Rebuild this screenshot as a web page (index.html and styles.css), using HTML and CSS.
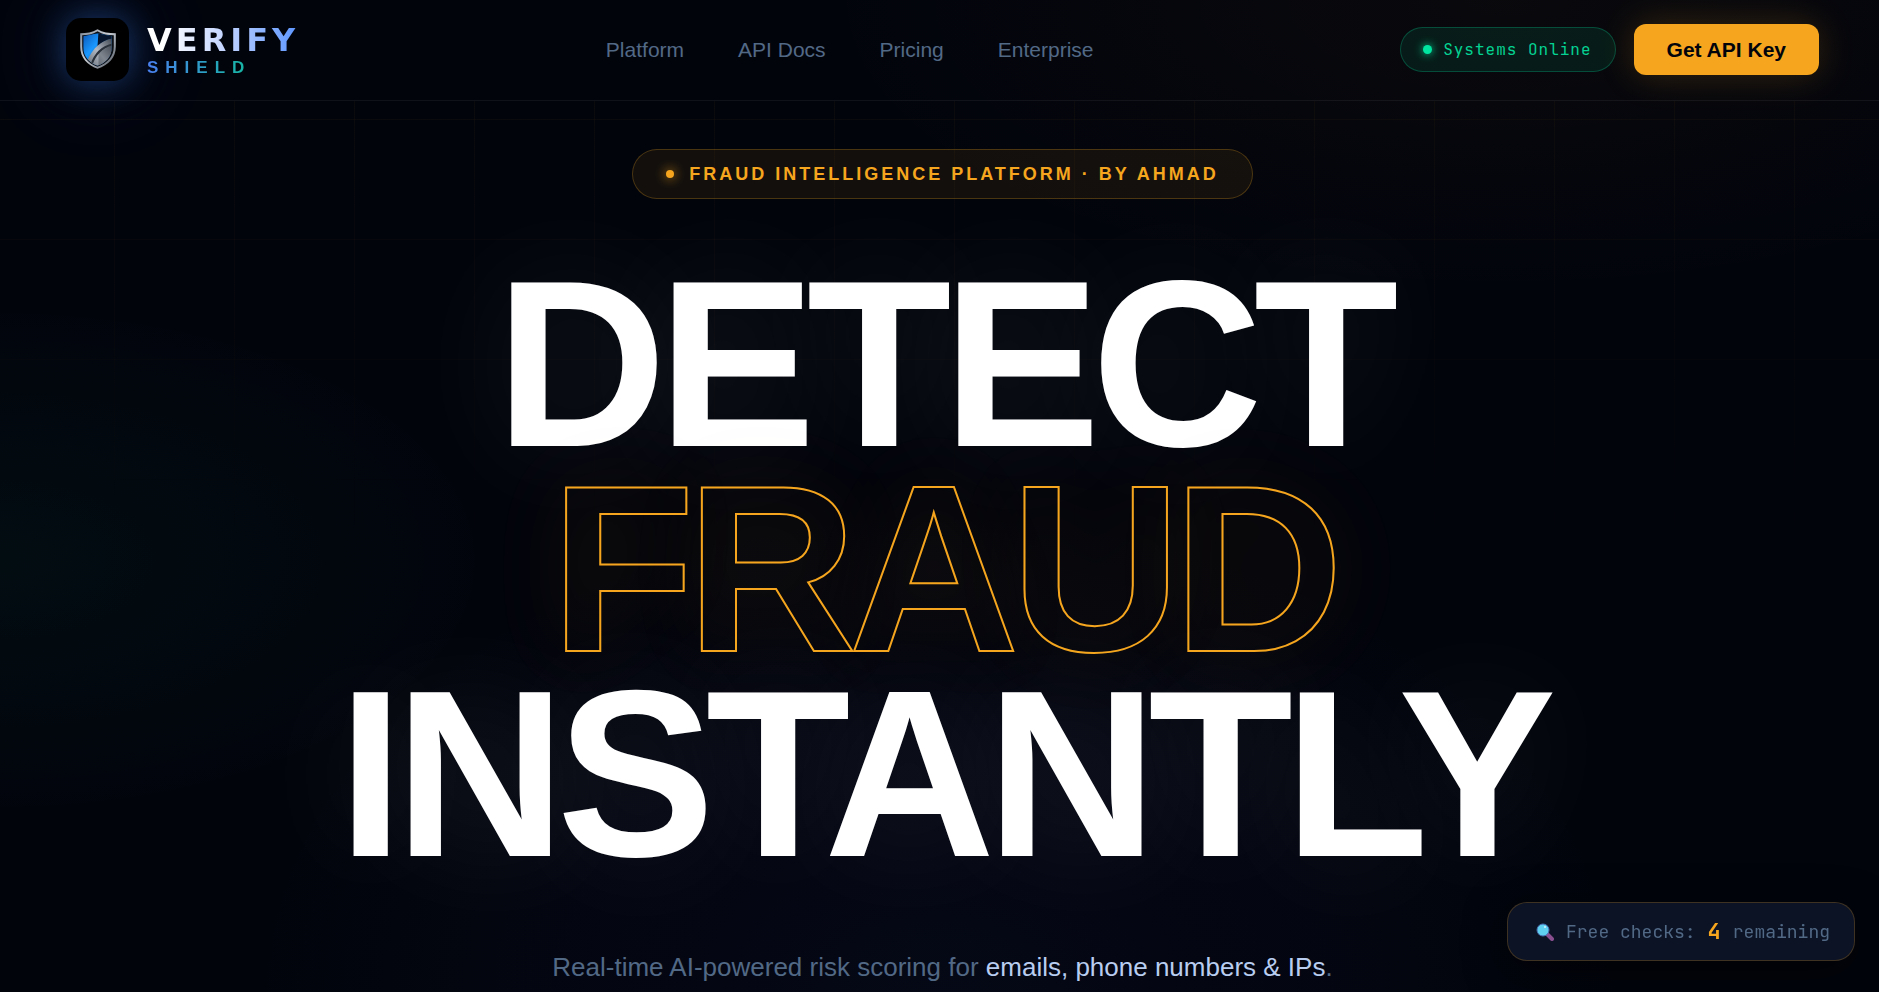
FILE: index.html
```html
<!DOCTYPE html>
<html lang="en">
<head>
    <meta charset="UTF-8">
    <meta name="viewport" content="width=device-width, initial-scale=1.0">
    <title>Verify Shield</title>
    <link rel="stylesheet" href="styles.css">
</head>
<body>

    <header class="navbar">
        <a href="#" class="logo">
            <span class="logo-tile">
                <svg viewBox="0 0 54 54" aria-hidden="true">
                    <defs>
                        <linearGradient id="rim" x1="0" y1="0" x2="1" y2="1">
                            <stop offset="0" stop-color="#7d8794"/>
                            <stop offset="0.45" stop-color="#c9ced5"/>
                            <stop offset="1" stop-color="#4a515b"/>
                        </linearGradient>
                        <linearGradient id="blue" x1="0" y1="0" x2="1" y2="1">
                            <stop offset="0" stop-color="#0a4fae"/>
                            <stop offset="0.4" stop-color="#1a98ff"/>
                            <stop offset="1" stop-color="#062a63"/>
                        </linearGradient>
                        <linearGradient id="steel" x1="1" y1="0" x2="0" y2="1">
                            <stop offset="0" stop-color="#3b424c"/>
                            <stop offset="0.5" stop-color="#b3b9c2"/>
                            <stop offset="1" stop-color="#5d6570"/>
                        </linearGradient>
                        <clipPath id="face">
                            <path d="M27 11 L41 14 V25 C41 34 35 40 27 43 C19 40 13 34 13 25 V14 Z"/>
                        </clipPath>
                    </defs>
                    <path d="M27 7 C32 10 38 11 45 11 V24 C45 35 38 42 27 46 C17 42 10 35 10 24 V11 C16 11 22 10 27 7 Z" fill="url(#rim)"/>
                    <path d="M27 9 C32 12 37 13 43 13 V24 C43 34 37 40 27 44 C17 40 12 34 12 24 V13 C17 13 22 12 27 9 Z" fill="#0b0f16"/>
                    <g clip-path="url(#face)">
                        <rect x="12" y="9" width="30" height="36" fill="url(#blue)"/>
                        <path d="M28 9 H44 V16 C36 17 31 20 27 24 Z" fill="#07152c"/>
                        <path d="M42 16 C32 18 22 25 17 38 L27 46 L42 34 Z" fill="url(#steel)"/>
                        <path d="M42 22 C33 24 25 30 21 42" fill="none" stroke="#2b323b" stroke-width="2"/>
                        <path d="M28 31 V46 L44 32 V23 C37 24 32 27 28 31 Z" fill="#20262e" opacity="0.35"/>
                    </g>
                </svg>
            </span>
            <span class="logo-text">
                <span class="logo-name">VERIFY</span>
                <span class="logo-sub">SHIELD</span>
            </span>
        </a>

        <nav class="nav-links">
            <a href="#platform">Platform</a>
            <a href="#docs">API Docs</a>
            <a href="#pricing">Pricing</a>
            <a href="#enterprise">Enterprise</a>
        </nav>

        <div class="nav-actions">
            <div class="status"><span class="status-dot"></span>Systems Online</div>
            <button type="button" class="key-button">Get API Key</button>
        </div>
    </header>

    <main class="hero">
        <div class="badge"><span class="badge-dot"></span>FRAUD INTELLIGENCE PLATFORM · BY AHMAD</div>
        <h1 class="title">
            <span>DETECT</span>
            <span class="outline">FRAUD</span>
            <span>INSTANTLY</span>
        </h1>
        <p class="subtitle">Real-time AI-powered risk scoring for <strong>emails, phone numbers &amp; IPs</strong>.</p>
    </main>

    <div class="checks">
        <svg class="checks-icon" viewBox="0 0 18 18" aria-hidden="true">
            <path d="M11 11 L16 16" stroke="#8a4f8f" stroke-width="4" stroke-linecap="round"/>
            <circle cx="7" cy="7" r="6" fill="#5fd0f0" stroke="#4a6fb5" stroke-width="1"/>
            <circle cx="9" cy="4" r="1" fill="#d5f6ff"/>
        </svg>
        <span>Free checks:</span>
        <span class="checks-count">4</span>
        <span>remaining</span>
    </div>

</body>
</html>
```
FILE: styles.css
```css
* {
    margin: 0;
    padding: 0;
    box-sizing: border-box;
}

body {
    min-height: 100vh;
    overflow: hidden;
    background-color: #02040c;
    background-image:
        radial-gradient(ellipse 500px 260px at 0 560px, rgba(0, 229, 160, 0.04), transparent),
        radial-gradient(ellipse 700px 300px at 80% 0, rgba(245, 166, 30, 0.03), transparent),
        radial-gradient(ellipse 700px 500px at 50% 1000px, rgba(60, 80, 200, 0.05), transparent);
    color: white;
    font-family: "Liberation Sans", Arial, sans-serif;
}

/* faint amber grid that fades out down the page */
body::before {
    content: "";
    position: absolute;
    inset: 101px 0 0 0;
    background-image:
        linear-gradient(rgba(245, 166, 30, 0.04) 1px, transparent 1px),
        linear-gradient(90deg, rgba(245, 166, 30, 0.04) 1px, transparent 1px);
    background-size: 120px 120px;
    background-position: -6px 18px;
    mask-image: linear-gradient(black, transparent 50%);
    z-index: -1;
}

.navbar {
    display: flex;
    align-items: center;
    justify-content: space-between;
    height: 101px;
    padding: 0 60px 1px 66px;
    border-bottom: 1px solid rgba(255, 255, 255, 0.06);
}

.logo {
    display: flex;
    align-items: center;
    gap: 18px;
    text-decoration: none;
}

.logo-tile {
    width: 63px;
    height: 63px;
    padding: 4px;
    border-radius: 15px;
    background: black;
    box-shadow: 0 0 36px rgba(59, 130, 246, 0.4), 0 0 90px rgba(59, 130, 246, 0.2);
}

.logo-text {
    display: flex;
    flex-direction: column;
    gap: 3px;
    padding-top: 2px;
}

.logo-name {
    font-family: "Arial Black", "DejaVu Sans", sans-serif;
    font-size: 32px;
    font-weight: 900;
    line-height: 32px;
    letter-spacing: 4px;
    color: transparent;
    background: linear-gradient(90deg, #ffffff 10%, #c5d6ff 50%, #5b95ff);
    background-clip: text;
}

.logo-sub {
    align-self: flex-start;
    font-size: 17px;
    font-weight: bold;
    line-height: 18px;
    letter-spacing: 7px;
    color: transparent;
    background: linear-gradient(90deg, #4a80f0, #14b8a0);
    background-clip: text;
}

.nav-links {
    display: flex;
    gap: 54px;
}

.nav-links a {
    font-size: 21px;
    color: #526986;
    text-decoration: none;
}

.nav-actions {
    display: flex;
    align-items: center;
    gap: 18px;
}

.status {
    display: flex;
    align-items: center;
    gap: 11px;
    height: 45px;
    padding: 0 23px 0 22px;
    border: 1px solid rgba(0, 229, 160, 0.25);
    border-radius: 23px;
    background: rgba(0, 229, 160, 0.09);
    color: #04d293;
    font-family: "JetBrains Mono", "DejaVu Sans Mono", monospace;
    font-size: 16px;
    letter-spacing: 1px;
}

.status-dot {
    width: 9px;
    height: 9px;
    border-radius: 50%;
    background: #00e5a0;
    box-shadow: 0 0 9px #00e5a0;
}

.key-button {
    height: 51px;
    padding: 0 33px;
    border: none;
    border-radius: 12px;
    background: #f5a61e;
    color: #02040c;
    font-family: inherit;
    font-size: 21px;
    font-weight: bold;
    cursor: pointer;
    box-shadow: 0 0 36px rgba(245, 166, 30, 0.2);
}

.hero {
    display: flex;
    flex-direction: column;
    align-items: center;
    padding: 48px 0 0 6px;
    text-align: center;
}

.badge {
    display: flex;
    align-items: center;
    gap: 15px;
    height: 50px;
    padding: 0 33px;
    border: 1px solid rgba(245, 166, 30, 0.25);
    border-radius: 25px;
    background: rgba(245, 166, 30, 0.07);
    color: #f5a61e;
    font-size: 18px;
    font-weight: bold;
    letter-spacing: 3px;
}

.badge-dot {
    width: 8px;
    height: 8px;
    border-radius: 50%;
    background: #f5a61e;
    box-shadow: 0 0 12px #f5a61e;
}

.title {
    display: flex;
    flex-direction: column;
    margin-top: 62px;
    font-size: clamp(64px, 13vw, 237px);
    font-weight: bold;
    line-height: 205px;
    letter-spacing: -9px;
    text-shadow: 0 0 120px rgba(255, 255, 255, 0.1);
}

.outline {
    color: transparent;
    -webkit-text-stroke: 2px #f5a61e;
    text-shadow: 0 0 80px rgba(245, 166, 30, 0.08);
}

.subtitle {
    margin-top: 68px;
    font-size: 26px;
    line-height: 46px;
    color: #526986;
}

.subtitle strong {
    font-weight: normal;
    color: #b8cdf0;
}

.checks {
    position: fixed;
    right: 24px;
    bottom: 31px;
    display: flex;
    align-items: center;
    gap: 12px;
    height: 59px;
    padding: 0 24px 0 28px;
    border: 1px solid rgba(245, 166, 30, 0.22);
    border-radius: 20px;
    background: #0b1325;
    color: #526986;
    font-family: "JetBrains Mono", "DejaVu Sans Mono", monospace;
    font-size: 18px;
    box-shadow: 0 10px 40px rgba(0, 0, 0, 0.5);
}

.checks-icon {
    width: 18px;
    height: 18px;
}

.checks-count {
    color: #f5a61e;
    font-size: 22px;
    font-weight: bold;
}
```
